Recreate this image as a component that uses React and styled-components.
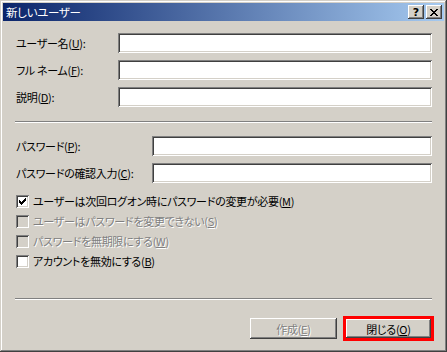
import React from 'react';
import styled, { createGlobalStyle } from 'styled-components';

const Global = createGlobalStyle`
  html, body {
    margin: 0;
    padding: 0;
    background: #d4d0c8;
  }
  * {
    box-sizing: border-box;
  }
`;

const font = `"MS UI Gothic", "Noto Sans CJK JP", "Liberation Sans", sans-serif`;

const Window = styled.div`
  width: 447px;
  height: 352px;
  padding: 3px;
  display: flex;
  flex-direction: column;
  background: #d4d0c8;
  font-family: ${font};
  font-size: 11px;
  letter-spacing: -0.3px;
  font-feature-settings: 'palt';
  color: #000;
  box-shadow: inset -1px -1px #404040, inset 1px 1px #d4d0c8,
    inset -2px -2px #808080, inset 2px 2px #fff;
`;

const TitleBar = styled.div`
  height: 18px;
  display: flex;
  align-items: center;
  justify-content: space-between;
  padding: 0 2px 0 3px;
  background: linear-gradient(to right, #0a246a, #a6caf0);
`;

const Title = styled.span`
  color: #fff;
  font-size: 11.5px;
  line-height: 18px;
`;

const CaptionButtons = styled.div`
  display: flex;
  gap: 2px;
`;

const CaptionButton = styled.div`
  width: 16px;
  height: 14px;
  display: flex;
  align-items: center;
  justify-content: center;
  background: #d4d0c8;
  font-family: "DejaVu Sans", sans-serif;
  font-weight: bold;
  font-size: 11px;
  letter-spacing: 0;
  line-height: 1;
  box-shadow: inset -1px -1px #404040, inset 1px 1px #fff,
    inset -2px -2px #808080;
`;

const Body = styled.div`
  flex: 1;
  display: flex;
  flex-direction: column;
  padding: 12px 12px 0;
`;

const FieldGrid = styled.div`
  display: grid;
  grid-template-columns: ${p => p.$label}px 1fr;
  row-gap: 7px;
  align-items: center;
  margin-top: ${p => p.$top || 0}px;
`;

const Label = styled.label`
  padding-left: 1px;
  white-space: nowrap;
  line-height: 20px;
`;

const Input = styled.div`
  height: 20px;
  background: #fff;
  box-shadow: inset 1px 1px #808080, inset -1px -1px #fff,
    inset 2px 2px #404040, inset -2px -2px #d4d0c8;
`;

const Separator = styled.div`
  height: 2px;
  border-top: 1px solid #808080;
  border-bottom: 1px solid #fff;
  margin-top: ${p => p.$top}px;
`;

const CheckList = styled.div`
  display: flex;
  flex-direction: column;
  margin-top: 8px;
`;

const CheckRow = styled.div`
  height: 20px;
  display: flex;
  align-items: center;
  gap: 4px;
  padding-left: 1px;
  white-space: nowrap;
  color: ${p => (p.$disabled ? '#808080' : '#000')};
  text-shadow: ${p => (p.$disabled ? '1px 1px #fff' : 'none')};
`;

const Box = styled.span`
  width: 13px;
  height: 13px;
  flex: none;
  display: flex;
  align-items: center;
  justify-content: center;
  background: ${p => (p.$disabled ? '#d4d0c8' : '#fff')};
  box-shadow: inset 1px 1px #808080, inset -1px -1px #fff,
    inset 2px 2px #404040, inset -2px -2px #d4d0c8;
`;

const ButtonRow = styled.div`
  display: flex;
  justify-content: flex-end;
  gap: 8px;
  margin-top: 18px;
`;

const Button = styled.div`
  width: 87px;
  height: 21px;
  display: flex;
  align-items: center;
  justify-content: center;
  background: #d4d0c8;
  color: ${p => (p.$disabled ? '#808080' : '#000')};
  text-shadow: ${p => (p.$disabled ? '1px 1px #fff' : 'none')};
  border: ${p => (p.$default ? '1px solid #000' : 'none')};
  box-shadow: inset -1px -1px #404040, inset 1px 1px #fff,
    inset -2px -2px #808080;
  outline: ${p => (p.$marked ? '3px solid #ff0000' : 'none')};
  outline-offset: -1px;
`;

const Check = () => (
  <svg width="7" height="7" viewBox="0 0 7 7">
    <path d="M0 2h1v1h1v1h1V3h1V2h1V1h1V0h1v3H6v1H5v1H4v1H3v1H2V6H1V5H0z" fill="#000" />
  </svg>
);

const Close = () => (
  <svg width="8" height="7" viewBox="0 0 8 7">
    <path
      d="M0 0h2v1h1v1h2V1h1V0h2v1H7v1H6v1H5v1h1v1h1v1h1v1H6V6H5V5H3v1H2v1H0V6h1V5h1V4h1V3H2V2H1V1H0z"
      fill="#000"
    />
  </svg>
);

const Key = ({ k }) => (
  <>
    (<u>{k}</u>)
  </>
);

const userFields = [
  ['ユーザー名', 'U'],
  ['フル ネーム', 'F'],
  ['説明', 'D'],
];

const passFields = [
  ['パスワード', 'P'],
  ['パスワードの確認入力', 'C'],
];

const checks = [
  { text: 'ユーザーは次回ログオン時にパスワードの変更が必要', k: 'M', checked: true },
  { text: 'ユーザーはパスワードを変更できない', k: 'S', disabled: true },
  { text: 'パスワードを無期限にする', k: 'W', disabled: true },
  { text: 'アカウントを無効にする', k: 'B' },
];

export default function App() {
  return (
    <>
      <Global />
      <Window>
        <TitleBar>
          <Title>新しいユーザー</Title>
          <CaptionButtons>
            <CaptionButton>?</CaptionButton>
            <CaptionButton>
              <Close />
            </CaptionButton>
          </CaptionButtons>
        </TitleBar>
        <Body>
          <FieldGrid $label={103}>
            {userFields.map(([text, k]) => (
              <React.Fragment key={k}>
                <Label>
                  {text}
                  <Key k={k} />:
                </Label>
                <Input />
              </React.Fragment>
            ))}
          </FieldGrid>
          <Separator $top={14} />
          <FieldGrid $label={137} $top={13}>
            {passFields.map(([text, k]) => (
              <React.Fragment key={k}>
                <Label>
                  {text}
                  <Key k={k} />:
                </Label>
                <Input />
              </React.Fragment>
            ))}
          </FieldGrid>
          <CheckList>
            {checks.map(c => (
              <CheckRow key={c.k} $disabled={c.disabled}>
                <Box $disabled={c.disabled}>{c.checked && <Check />}</Box>
                <span>
                  {c.text}
                  <Key k={c.k} />
                </span>
              </CheckRow>
            ))}
          </CheckList>
          <Separator $top={27} />
          <ButtonRow>
            <Button $disabled>
              作成<Key k="E" />
            </Button>
            <Button $default $marked>
              閉じる<Key k="O" />
            </Button>
          </ButtonRow>
        </Body>
      </Window>
    </>
  );
}
